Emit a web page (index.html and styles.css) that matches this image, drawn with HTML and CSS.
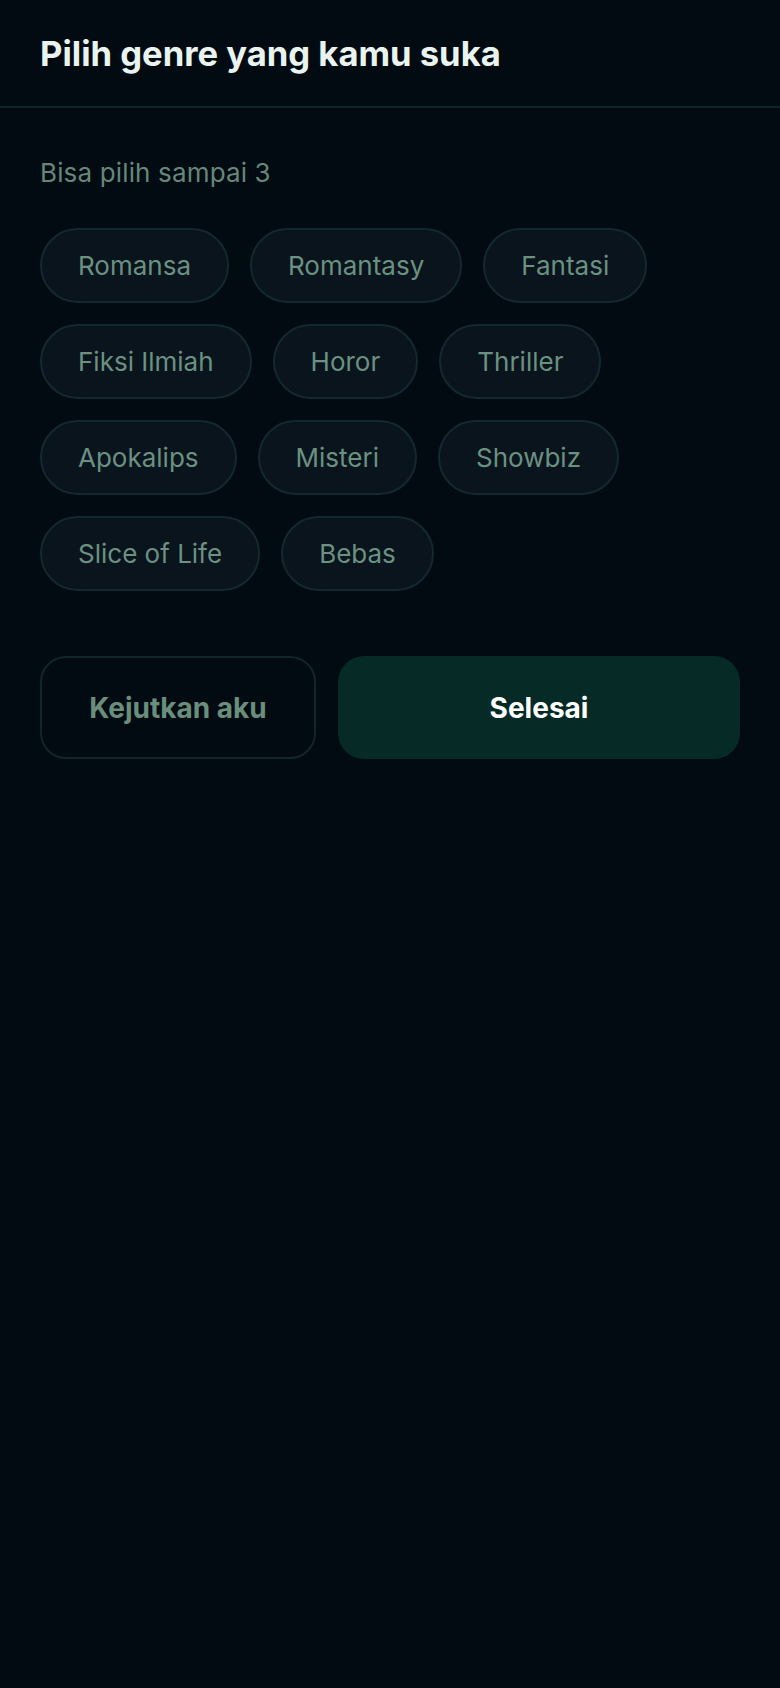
FILE: index.html
```html
<!DOCTYPE html>
<html lang="id">
<head>
<meta charset="utf-8">
<title>Pilih genre</title>
<link rel="stylesheet" href="styles.css">
</head>
<body>
<header class="topbar">
  <h1 class="title">Pilih genre yang kamu suka</h1>
</header>
<main class="content">
  <p class="hint">Bisa pilih sampai 3</p>
  <div class="chips">
    <button class="chip">Romansa</button>
    <button class="chip">Romantasy</button>
    <button class="chip">Fantasi</button>
    <button class="chip">Fiksi Ilmiah</button>
    <button class="chip">Horor</button>
    <button class="chip">Thriller</button>
    <button class="chip">Apokalips</button>
    <button class="chip">Misteri</button>
    <button class="chip">Showbiz</button>
    <button class="chip">Slice of Life</button>
    <button class="chip">Bebas</button>
  </div>
  <div class="actions">
    <button class="btn btn-ghost">Kejutkan aku</button>
    <button class="btn btn-primary">Selesai</button>
  </div>
</main>
</body>
</html>
```
FILE: styles.css
```css
* { box-sizing: border-box; }
html, body {
  margin: 0;
  padding: 0;
  background: #020a12;
  font-family: Inter, "Noto Sans", sans-serif;
}
body { min-height: 1688px; }
.topbar {
  height: 108px;
  padding: 0 40px;
  display: flex;
  align-items: center;
  border-bottom: 2px solid #0f2329;
}
.title {
  margin: 0;
  font-size: 34.6px;
  font-weight: 700;
  color: #eaf4ef;
}
.content {
  padding: 49px 40px 40px;
}
.hint {
  margin: 0 0 40px;
  font-size: 26px;
  line-height: 31px;
  letter-spacing: 0.15px;
  color: #66887a;
}
.chips {
  display: flex;
  flex-wrap: wrap;
  column-gap: 21px;
  row-gap: 21px;
}
.chip {
  height: 75px;
  padding: 0 36px;
  border-radius: 38px;
  border: 2px solid #14292f;
  background: #0a141c;
  color: #6a9182;
  font-family: inherit;
  font-size: 26px;
  font-weight: 400;
}
.actions {
  display: flex;
  gap: 22px;
  margin-top: 65px;
}
.btn {
  height: 103px;
  border-radius: 26px;
  font-family: inherit;
  font-size: 28px;
  font-weight: 700;
}
.btn-ghost {
  flex: 2;
  background: transparent;
  border: 2px solid #12252b;
  color: #6a8e7c;
}
.btn-primary {
  flex: 3;
  background: #062b27;
  border: none;
  color: #ffffff;
}
```
